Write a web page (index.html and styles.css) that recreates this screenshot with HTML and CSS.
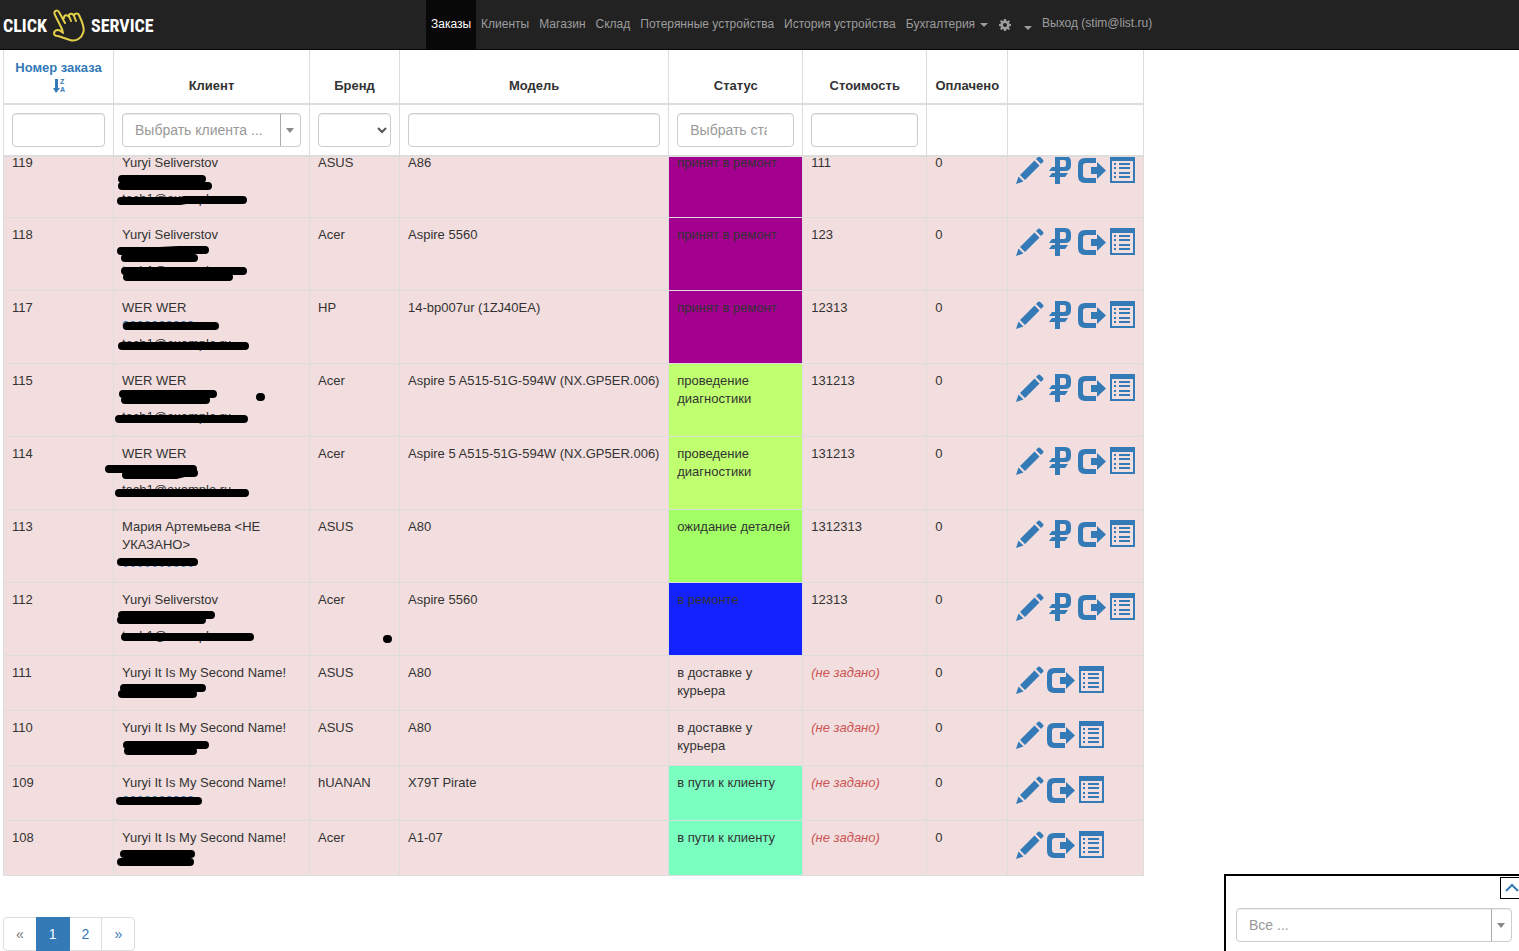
FILE: index.html
```
<!DOCTYPE html>
<html lang="ru">
<head>
  <meta charset="UTF-8">
  <meta name="viewport" content="width=device-width, initial-scale=1.0">
  <link rel="stylesheet" href="styles.css">
  <title>Заказы</title>
</head>
<body>
  <svg class="sprite" aria-hidden="true">
    <symbol id="i-pencil" viewBox="0 0 28 28">
      <path d="M0 28 2.500 20.500 7.500 25.500zM4 19 18.500 4.500 23.500 9.500 9 24zM20 3 22.200.8Q23 0 24 .8L27.200 4Q28 5 27.200 5.800L25 8z"/>
    </symbol>
    <symbol id="i-rub" viewBox="0 0 28 28">
      <path fill-rule="evenodd" d="M8 0H18Q24 0 24 6V9Q24 15 18 15H13V17H21L18 21H13V28H8V21H2L5 17H8V15H2L5 11H8zM13 4V11H17Q19 11 19 9V6Q19 4 17 4z"/>
    </symbol>
    <symbol id="i-export" viewBox="0 0 28 28">
      <path d="M7 2H18V7H8Q5 7 5 10V19Q5 22 8 22H18V27H7Q0 27 0 20V9Q0 2 7 2zM13 11H19V6L28 14.500 19 23V18H13z"/>
    </symbol>
    <symbol id="i-list" viewBox="0 0 28 28">
      <path fill-rule="evenodd" d="M1 0H26V27H1zM3 5V25H24V5zM5 7H7V9H5zM10 7H21V9H10zM5 11H7V13H5zM10 11H21V13H10zM5 16H7V18H5zM10 16H21V18H10zM5 20H7V22H5zM10 20H21V22H10z"/>
    </symbol>
  </svg>

  <nav class="navbar">
    <a class="brand" href="#" aria-label="Click Service">
      <span>CLICK</span>
      <svg class="brand-hand" viewBox="0 0 34 34" aria-hidden="true">
        <path d="M13 14 7 3C5 0 1 2 3 6L10 20 11 24C8 20 3 20 2 24 2 26 4 27 6 27L18 31C25 33 30 28 31 24 33 20 31 17 30 13L27 6C26 4 22 4 22 7L24 12M22 7C21 4 17 4 17 7L19 12M17 8C15 5 12 6 12 9"/>
      </svg>
      <span>SERVICE</span>
    </a>
    <ul class="menu">
      <li class="active"><a href="#">Заказы</a></li>
      <li><a href="#">Клиенты</a></li>
      <li><a href="#">Магазин</a></li>
      <li><a href="#">Склад</a></li>
      <li><a href="#">Потерянные устройства</a></li>
      <li><a href="#">История устройства</a></li>
      <li><a href="#">Бухгалтерия <b class="caret"></b></a></li>
      <li><a href="#" aria-label="Настройки"><svg class="gear" viewBox="0 0 12 12" aria-hidden="true"><path fill-rule="evenodd" d="M5 0H7L7.400 1.700 8.500 2.200 10 1.200 11 2.300 9.900 3.700 10.400 4.800 12 5V7L10.400 7.300 9.900 8.400 11 9.800 9.800 11 8.400 10 7.300 10.400 7 12H5L4.700 10.400 3.600 10 2.200 11 1 9.800 2 8.400 1.600 7.300 0 7V5L1.600 4.700 2 3.600 1 2.200 2.200 1 3.600 2 4.700 1.600zM6 4A2 2 0 1 0 6 8 2 2 0 1 0 6 4z"/></svg></a></li>
      <li class="more"><a href="#" aria-label="Ещё"><b class="caret"></b></a></li>
    </ul>
    <button class="logout" type="button">Выход (stim@list.ru)</button>
  </nav>

  <main class="orders">
    <table class="grid grid-head">
      <colgroup>
        <col class="c-num"><col class="c-client"><col class="c-brand"><col><col class="c-status"><col class="c-price"><col class="c-paid"><col class="c-actions">
      </colgroup>
      <thead>
        <tr>
          <th><a href="#">Номер заказа
            <svg class="sort" viewBox="0 0 12 14" aria-hidden="true"><path d="M2 0H5V9H7L3 14 0 9H2z"/><text x="7" y="5">Z</text><text x="7" y="13">A</text></svg></a></th>
          <th>Клиент</th>
          <th>Бренд</th>
          <th>Модель</th>
          <th>Статус</th>
          <th>Стоимость</th>
          <th>Оплачено</th>
          <th></th>
        </tr>
        <tr class="filters">
          <td><input class="control" type="text" aria-label="Номер заказа"></td>
          <td>
            <div class="combo">
              <select class="control" aria-label="Клиент"><option>Выбрать клиента ...</option></select>
            </div>
          </td>
          <td><select class="control brand-select" aria-label="Бренд"><option></option><option>Acer</option><option>ASUS</option><option>HP</option></select></td>
          <td><input class="control" type="text" aria-label="Модель"></td>
          <td><input class="control status-input" type="text" placeholder="Выбрать статус" aria-label="Статус"></td>
          <td><input class="control" type="text" aria-label="Стоимость"></td>
          <td></td>
          <td></td>
        </tr>
      </thead>
    </table>

    <table class="grid grid-body">
      <colgroup>
        <col class="c-num"><col class="c-client"><col class="c-brand"><col><col class="c-status"><col class="c-price"><col class="c-paid"><col class="c-actions">
      </colgroup>
      <tbody>
        <tr class="tall">
          <td>119</td>
          <td class="client">Yuryi Seliverstov<br><br>tech1@example.ru<svg class="marker"><path d="M8 33H88M8 40H94M7 55H66L72 54H129"/></svg></td>
          <td>ASUS</td>
          <td>A86</td>
          <td class="accepted">принят в ремонт</td>
          <td>111</td>
          <td>0</td>
          <td><div class="actions"><a href="#" aria-label="Изменить"><svg><use href="#i-pencil"/></svg></a><a href="#" aria-label="Оплата"><svg><use href="#i-rub"/></svg></a><a href="#" aria-label="Выдать"><svg><use href="#i-export"/></svg></a><a href="#" aria-label="Подробно"><svg><use href="#i-list"/></svg></a></div></td>
        </tr>
        <tr class="tall">
          <td>118</td>
          <td class="client">Yuryi Seliverstov<br><br>tech1@example.ru<svg class="marker"><path d="M7 33H45L65 32H91M11 40H80M11 53H129M13 59H115"/></svg></td>
          <td>Acer</td>
          <td>Aspire 5560</td>
          <td class="accepted">принят в ремонт</td>
          <td>123</td>
          <td>0</td>
          <td><div class="actions"><a href="#" aria-label="Изменить"><svg><use href="#i-pencil"/></svg></a><a href="#" aria-label="Оплата"><svg><use href="#i-rub"/></svg></a><a href="#" aria-label="Выдать"><svg><use href="#i-export"/></svg></a><a href="#" aria-label="Подробно"><svg><use href="#i-list"/></svg></a></div></td>
        </tr>
        <tr class="tall">
          <td>117</td>
          <td class="client">WER WER<br><a href="#">0000000000</a><br>tech1@example.ru<svg class="marker"><path d="M13 35H101M8 55H131"/></svg></td>
          <td>HP</td>
          <td>14-bp007ur (1ZJ40EA)</td>
          <td class="accepted">принят в ремонт</td>
          <td>12313</td>
          <td>0</td>
          <td><div class="actions"><a href="#" aria-label="Изменить"><svg><use href="#i-pencil"/></svg></a><a href="#" aria-label="Оплата"><svg><use href="#i-rub"/></svg></a><a href="#" aria-label="Выдать"><svg><use href="#i-export"/></svg></a><a href="#" aria-label="Подробно"><svg><use href="#i-list"/></svg></a></div></td>
        </tr>
        <tr class="tall">
          <td>115</td>
          <td class="client">WER WER<br><br>tech1@example.ru<svg class="marker"><path d="M9 30H99M11 36H92M146 33h1M5 55H130"/></svg></td>
          <td>Acer</td>
          <td>Aspire 5 A515-51G-594W (NX.GP5ER.006)</td>
          <td class="diagnostics">проведение диагностики</td>
          <td>131213</td>
          <td>0</td>
          <td><div class="actions"><a href="#" aria-label="Изменить"><svg><use href="#i-pencil"/></svg></a><a href="#" aria-label="Оплата"><svg><use href="#i-rub"/></svg></a><a href="#" aria-label="Выдать"><svg><use href="#i-export"/></svg></a><a href="#" aria-label="Подробно"><svg><use href="#i-list"/></svg></a></div></td>
        </tr>
        <tr class="tall">
          <td>114</td>
          <td class="client">WER WER<br><br>tech1@example.ru<svg class="marker"><path d="M-5 32H79M12 38H62L70 36H80M5 56H131"/></svg></td>
          <td>Acer</td>
          <td>Aspire 5 A515-51G-594W (NX.GP5ER.006)</td>
          <td class="diagnostics">проведение диагностики</td>
          <td>131213</td>
          <td>0</td>
          <td><div class="actions"><a href="#" aria-label="Изменить"><svg><use href="#i-pencil"/></svg></a><a href="#" aria-label="Оплата"><svg><use href="#i-rub"/></svg></a><a href="#" aria-label="Выдать"><svg><use href="#i-export"/></svg></a><a href="#" aria-label="Подробно"><svg><use href="#i-list"/></svg></a></div></td>
        </tr>
        <tr class="tall">
          <td>113</td>
          <td class="client">Мария Артемьева &lt;НЕ УКАЗАНО&gt;<br><a href="#">0000000000</a><svg class="marker"><path d="M7 52H80"/></svg></td>
          <td>ASUS</td>
          <td>A80</td>
          <td class="waiting">ожидание деталей</td>
          <td>1312313</td>
          <td>0</td>
          <td><div class="actions"><a href="#" aria-label="Изменить"><svg><use href="#i-pencil"/></svg></a><a href="#" aria-label="Оплата"><svg><use href="#i-rub"/></svg></a><a href="#" aria-label="Выдать"><svg><use href="#i-export"/></svg></a><a href="#" aria-label="Подробно"><svg><use href="#i-list"/></svg></a></div></td>
        </tr>
        <tr class="tall">
          <td>112</td>
          <td class="client">Yuryi Seliverstov<br><br>tech1@example.ru<svg class="marker"><path d="M8 32H97M7 37H88M11 54H136M273 56h1"/></svg></td>
          <td>Acer</td>
          <td>Aspire 5560</td>
          <td class="repair">в ремонте</td>
          <td>12313</td>
          <td>0</td>
          <td><div class="actions"><a href="#" aria-label="Изменить"><svg><use href="#i-pencil"/></svg></a><a href="#" aria-label="Оплата"><svg><use href="#i-rub"/></svg></a><a href="#" aria-label="Выдать"><svg><use href="#i-export"/></svg></a><a href="#" aria-label="Подробно"><svg><use href="#i-list"/></svg></a></div></td>
        </tr>
        <tr>
          <td>111</td>
          <td class="client">Yuryi It Is My Second Name!<svg class="marker"><path d="M10 32H88M8 38H79"/></svg></td>
          <td>ASUS</td>
          <td>A80</td>
          <td>в доставке у курьера</td>
          <td><span class="not-set">(не задано)</span></td>
          <td>0</td>
          <td><div class="actions"><a href="#" aria-label="Изменить"><svg><use href="#i-pencil"/></svg></a><a href="#" aria-label="Выдать"><svg><use href="#i-export"/></svg></a><a href="#" aria-label="Подробно"><svg><use href="#i-list"/></svg></a></div></td>
        </tr>
        <tr>
          <td>110</td>
          <td class="client">Yuryi It Is My Second Name!<svg class="marker"><path d="M13 34H91M14 40H79"/></svg></td>
          <td>ASUS</td>
          <td>A80</td>
          <td>в доставке у курьера</td>
          <td><span class="not-set">(не задано)</span></td>
          <td>0</td>
          <td><div class="actions"><a href="#" aria-label="Изменить"><svg><use href="#i-pencil"/></svg></a><a href="#" aria-label="Выдать"><svg><use href="#i-export"/></svg></a><a href="#" aria-label="Подробно"><svg><use href="#i-list"/></svg></a></div></td>
        </tr>
        <tr>
          <td>109</td>
          <td class="client">Yuryi It Is My Second Name!<br><a href="#">0000000000</a><svg class="marker"><path d="M6 35H84"/></svg></td>
          <td>hUANAN</td>
          <td>X79T Pirate</td>
          <td class="on-way">в пути к клиенту</td>
          <td><span class="not-set">(не задано)</span></td>
          <td>0</td>
          <td><div class="actions"><a href="#" aria-label="Изменить"><svg><use href="#i-pencil"/></svg></a><a href="#" aria-label="Выдать"><svg><use href="#i-export"/></svg></a><a href="#" aria-label="Подробно"><svg><use href="#i-list"/></svg></a></div></td>
        </tr>
        <tr>
          <td>108</td>
          <td class="client">Yuryi It Is My Second Name!<svg class="marker"><path d="M10 33H77M7 41H76"/></svg></td>
          <td>Acer</td>
          <td>A1-07</td>
          <td class="on-way">в пути к клиенту</td>
          <td><span class="not-set">(не задано)</span></td>
          <td>0</td>
          <td><div class="actions"><a href="#" aria-label="Изменить"><svg><use href="#i-pencil"/></svg></a><a href="#" aria-label="Выдать"><svg><use href="#i-export"/></svg></a><a href="#" aria-label="Подробно"><svg><use href="#i-list"/></svg></a></div></td>
        </tr>
      </tbody>
    </table>

    <ul class="pagination">
      <li class="disabled"><span>«</span></li>
      <li class="active"><a href="#">1</a></li>
      <li><a href="#">2</a></li>
      <li><a href="#">»</a></li>
    </ul>
  </main>

  <aside class="panel">
    <button class="panel-toggle" type="button" aria-label="Развернуть"><svg viewBox="0 0 14 10" aria-hidden="true"><path d="M1 8 7 2 13 8"/></svg></button>
    <div class="combo">
      <select class="control" aria-label="Фильтр"><option>Все ...</option></select>
    </div>
  </aside>
</body>
</html>
```
FILE: styles.css
```
* {
  box-sizing: border-box;
}

body {
  margin: 0;
  font-family: "Liberation Sans", Arial, sans-serif;
  font-size: 13px;
  line-height: 18px;
  color: #333;
  background-color: #fff;
}

a {
  color: #337ab7;
  text-decoration: none;
}

.sprite {
  display: none;
}

/* navbar */
.navbar {
  position: sticky;
  top: 0;
  z-index: 10;
  display: flex;
  height: 50px;
  background-color: #222;
  border-bottom: 1px solid #080808;
}

.brand {
  display: flex;
  align-items: center;
  flex-shrink: 0;
  gap: 5px;
  width: 153px;
  margin-right: 273px;
  padding-top: 2px;
  padding-left: 3px;
  color: #fff;
  font-family: "Roboto Condensed", "Liberation Sans Narrow", Roboto, sans-serif;
  font-size: 18px;
  font-weight: bold;
}

.brand-hand {
  width: 34px;
  height: 34px;
  flex-shrink: 0;
  fill: none;
  stroke: #e3cf4a;
  stroke-width: 2;
  stroke-linejoin: round;
  stroke-linecap: round;
}

.menu {
  display: flex;
  margin: 0;
  padding: 0;
  list-style: none;
  white-space: nowrap;
}

.menu a {
  display: flex;
  align-items: center;
  height: 49px;
  padding: 0 5px 2px;
  font-size: 12px;
  color: #9d9d9d;
}

.menu .active a {
  color: #fff;
  background-color: #080808;
}

.caret {
  margin: 2px 1px 0 5px;
  border-top: 4px solid;
  border-left: 4px solid transparent;
  border-right: 4px solid transparent;
}

.gear {
  width: 12px;
  height: 12px;
  margin-top: 3px;
  fill: currentColor;
}

.more .caret {
  margin: 8px 0 0 3px;
}

.logout {
  height: 46px;
  padding: 0 5px;
  border: none;
  background: none;
  color: #9d9d9d;
  font-family: inherit;
  font-size: 12px;
  white-space: nowrap;
}

/* orders table */
.orders {
  width: calc(75% + 2px);
  margin-left: 3px;
}

.grid {
  width: 100%;
  table-layout: fixed;
  border-spacing: 0;
  border-left: 1px solid #ddd;
}

.c-num { width: 110px; }
.c-client { width: 196px; }
.c-brand { width: 90px; }
.c-status { width: 134px; }
.c-price { width: 124px; }
.c-paid { width: 81px; }
.c-actions { width: 136px; }

.grid th,
.grid td {
  padding: 8px;
  border-right: 1px solid #ddd;
  border-bottom: 1px solid #ddd;
  vertical-align: top;
  text-align: left;
}

.grid-head {
  position: sticky;
  top: 50px;
  z-index: 5;
  background-color: #fff;
}

.grid-head th {
  height: 55px;
  border-bottom-width: 2px;
  vertical-align: bottom;
  text-align: center;
}

.grid-head .filters td {
  border-bottom-width: 2px;
}

.sort {
  display: block;
  width: 12px;
  height: 14px;
  margin: 2px auto;
  fill: currentColor;
  font-size: 7px;
  font-weight: bold;
}

/* rows slide under the floating header */
.grid-body {
  margin-top: -11px;
}

.grid-body tr {
  height: 55px;
  background-color: #f2dede;
}

.grid-body .tall {
  height: 73px;
}

.grid-body .tall:first-child {
  height: 72px;
}

.client {
  position: relative;
}

.marker {
  position: absolute;
  top: 0;
  left: 0;
  width: 100%;
  height: 100%;
  overflow: visible;
  pointer-events: none;
  fill: none;
  stroke: #000;
  stroke-width: 8;
  stroke-linecap: round;
}

.accepted { background-color: #a3008f; }
.diagnostics { background-color: #c0ff70; }
.waiting { background-color: #a3ff66; }
.repair { background-color: #1422ff; }
.on-way { background-color: #7affc0; }

.not-set {
  color: #c55;
  font-style: italic;
}

.actions {
  display: flex;
  gap: 3px;
  padding-top: 2px;
}

.actions a {
  flex-shrink: 0;
  height: 28px;
}

.actions svg {
  display: block;
  width: 28px;
  height: 28px;
  overflow: visible;
  fill: #337ab7;
}

/* form controls */
.control {
  display: block;
  width: 100%;
  height: 34px;
  padding: 6px 12px;
  border: 1px solid #ccc;
  border-radius: 4px;
  background-color: #fff;
  box-shadow: inset 0 1px 1px rgba(0, 0, 0, .075);
  color: #555;
  font-family: inherit;
  font-size: 14px;
}

.control::placeholder {
  color: #999;
}

.status-input {
  padding-right: 26px;
}

.combo {
  position: relative;
}

.combo .control {
  appearance: none;
  color: #999;
}

.combo::before {
  content: "";
  position: absolute;
  top: 1px;
  bottom: 1px;
  right: 20px;
  border-left: 1px solid #aaa;
}

.combo::after {
  content: "";
  position: absolute;
  top: 15px;
  right: 7px;
  border-top: 5px solid #888;
  border-left: 4px solid transparent;
  border-right: 4px solid transparent;
}

.brand-select {
  padding: 6px 0 6px 8px;
}

/* pagination */
.pagination {
  display: flex;
  margin: 41px 0 0;
  padding: 0;
  list-style: none;
  font-size: 14px;
  line-height: 20px;
}

.pagination a,
.pagination span {
  display: block;
  margin-left: -1px;
  padding: 6px 12px;
  border: 1px solid #ddd;
}

.pagination .disabled span {
  margin-left: 0;
  color: #777;
  border-radius: 4px 0 0 4px;
}

.pagination .active a {
  position: relative;
  color: #fff;
  background-color: #337ab7;
  border-color: #337ab7;
}

.pagination li:last-child a {
  border-radius: 0 4px 4px 0;
}

/* bottom right filter panel */
.panel {
  position: fixed;
  right: 0;
  bottom: 0;
  width: 295px;
  padding: 32px 7px 9px 10px;
  border: solid #000;
  border-width: 2px 0 0 2px;
  background-color: #fff;
}

.panel-toggle {
  position: absolute;
  top: 1px;
  right: 0;
  width: 19px;
  height: 22px;
  padding: 0 0 0 4px;
  border: 1px solid #000;
  border-right: none;
  background-color: #fff;
}

.panel-toggle svg {
  display: block;
  width: 14px;
  height: 10px;
  fill: none;
  stroke: #337ab7;
  stroke-width: 2;
}
```
